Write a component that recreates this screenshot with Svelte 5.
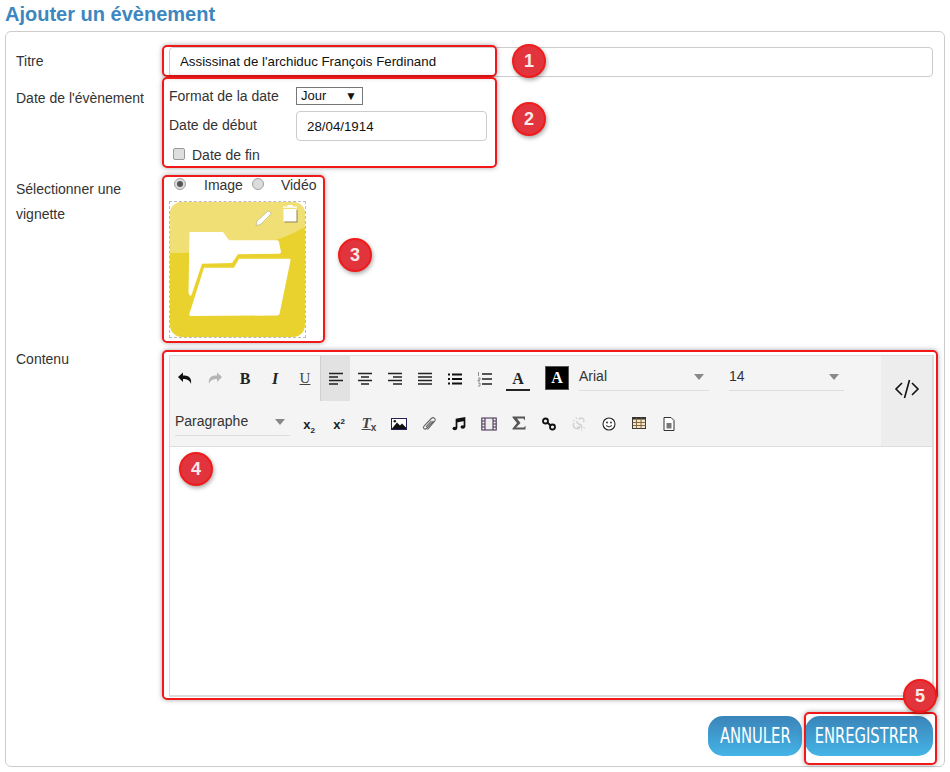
<script lang="ts">
	let title = 'Assissinat de l\'archiduc François Ferdinand';
	let startDate = '28/04/1914';

	const marks = [
		{ id: 'box-1', x: 162, y: 45, w: 335, h: 32 },
		{ id: 'box-2', x: 162, y: 77, w: 335, h: 91 },
		{ id: 'box-3', x: 162, y: 175, w: 163, h: 168 },
		{ id: 'box-4', x: 162, y: 350, w: 776, h: 350 },
		{ id: 'box-5', x: 804, y: 712, w: 133, h: 53 }
	];

	const badges = [
		{ n: 1, x: 529, y: 61 },
		{ n: 2, x: 529, y: 119 },
		{ n: 3, x: 355, y: 255 },
		{ n: 4, x: 196, y: 469 },
		{ n: 5, x: 920, y: 696 }
	];
</script>

<div class="page">
	<h1>Ajouter un évènement</h1>

	<form class="card">
		<div class="row">
			<label class="lbl title-lbl" for="titre">Titre</label>
			<input id="titre" class="field title-field" type="text" value={title} />
		</div>

		<div class="row date-row">
			<div class="lbl date-lbl">Date de l'évènement</div>
			<div class="date-grid">
				<span class="sub format">Format de la date</span>
				<div class="select"><span>Jour</span><span class="arr">▼</span></div>
				<span class="sub debut">Date de début</span>
				<input class="field date-field" type="text" value={startDate} />
				<div class="check-line">
					<span class="checkbox"></span>
					<span>Date de fin</span>
				</div>
			</div>
		</div>

		<div class="row thumb-row">
			<div class="lbl thumb-lbl">Sélectionner une vignette</div>
			<div>
				<div class="radios">
					<span class="radio on"></span>
					<span class="r-image">Image</span>
					<span class="radio"></span>
					<span class="r-video">Vidéo</span>
				</div>
				<div class="thumb">
					<svg width="135" height="135" viewBox="1 0 135 135">
						<rect x="1" y="0" width="135" height="135" rx="12" fill="#ead22e" />
						<path d="M1 12a12 12 0 0 1 12-12H124a12 12 0 0 1 12 12V25Q90 52 1 51Z" fill="#f0df75" />
						<path d="M20.500 30H54L60 38.300H108.500Q109.500 38.300 110 40L112 50Q112 51.700 110 51.700L69 52.300L63 61L33 61.700L22.500 93Q21 95 19.500 91Z" fill="#fff" />
						<path d="M70 56.700H120Q122 56.700 121.500 58.500L110.500 112Q110 113.300 108 113.500L22 114Q19.500 114 20.500 111.500L35 65.700H65Z" fill="#fff" />
						<path d="M87 23.500L88 19L98.500 9.500Q100 8.500 101.500 10Q102.500 11.500 101 13L91.500 22.500Z" fill="#fff" stroke="#b9b48a" stroke-width=".7" />
						<path d="M115.500 8H128.500V20.500H115.500Z" fill="#8d8450" />
						<path d="M114.500 7H127.500V19.500H114.500ZM114 4.500H128V5.700H114ZM118.500 3H123.500V4.500H118.500Z" fill="#fff" />
					</svg>
				</div>
			</div>
		</div>

		<div class="row editor-row">
			<div class="lbl content-lbl">Contenu</div>
			<div class="editor">
				<div class="toolbar">
					<div class="tools">
						<div class="tool-line">
							<button type="button" class="tb" aria-label="Annuler">
								<svg viewBox="0 0 16 16"><path d="M1 6L6 1.500V4.500C12 4.500 15 7 14 13C13 9.500 10.500 8 6 8V11Z" fill="#111" /></svg>
							</button>
							<button type="button" class="tb" aria-label="Rétablir">
								<svg viewBox="0 0 16 16"><path d="M15 6L10 1.500V4.500C4 4.500 1 7 2 13C3 9.500 5.500 8 10 8V11Z" fill="#b5b5b5" /></svg>
							</button>
							<button type="button" class="tb txt bold">B</button>
							<button type="button" class="tb txt ital">I</button>
							<button type="button" class="tb txt under">U</button>
							<button type="button" class="tb active" aria-label="Aligner à gauche">
								<svg viewBox="0 0 16 16"><path d="M1 2.500H15M1 6H10M1 9.500H15M1 13H10" stroke="#222" stroke-width="1.600" /></svg>
							</button>
							<button type="button" class="tb" aria-label="Centrer">
								<svg viewBox="0 0 16 16"><path d="M1 2.500H15M4 6H12M1 9.500H15M4 13H12" stroke="#222" stroke-width="1.600" /></svg>
							</button>
							<button type="button" class="tb" aria-label="Aligner à droite">
								<svg viewBox="0 0 16 16"><path d="M1 2.500H15M6 6H15M1 9.500H15M6 13H15" stroke="#222" stroke-width="1.600" /></svg>
							</button>
							<button type="button" class="tb" aria-label="Justifier">
								<svg viewBox="0 0 16 16"><path d="M1 2.500H15M1 6H15M1 9.500H15M1 13H15" stroke="#222" stroke-width="1.600" /></svg>
							</button>
							<button type="button" class="tb" aria-label="Liste">
								<svg viewBox="0 0 16 16"><path d="M5 3.500H15M5 8H15M5 12.500H15M1 3.500H3M1 8H3M1 12.500H3" stroke="#111" stroke-width="2" /></svg>
							</button>
							<button type="button" class="tb" aria-label="Liste numérotée">
								<svg viewBox="0 0 16 16"><path d="M5 3H15M5 8H15M5 13H15" stroke="#222" stroke-width="1.700" /><path d="M1.500 1V5M1 7H3V9H1V10H3M1 12H3V15H1" stroke="#777" stroke-width=".8" fill="none" /></svg>
							</button>
							<button type="button" class="color-a">A</button>
							<button type="button" class="color-bg">A</button>
							<div class="drop font"><span>Arial</span><i></i></div>
							<div class="drop size"><span>14</span><i></i></div>
						</div>
						<div class="tool-line">
							<div class="drop para"><span>Paragraphe</span><i></i></div>
							<button type="button" class="tb txt sub-sup"><span>x<sub>2</sub></span></button>
							<button type="button" class="tb txt sub-sup"><span>x<sup>2</sup></span></button>
							<button type="button" class="tb txt clear"><span><b>T</b><small>x</small></span></button>
							<button type="button" class="tb" aria-label="Image">
								<svg viewBox="0 0 16 16"><rect x=".5" y="2.500" width="15" height="11" fill="#fff" stroke="#2d1f55" /><path d="M1 12.500L6 6.500L9 9.500L11 7.500L15 11.500V13H1Z" fill="#111" /><circle cx="3.800" cy="5.200" r="1.300" fill="#222" /></svg>
							</button>
							<button type="button" class="tb" aria-label="Joindre">
								<svg viewBox="0 0 16 16"><path d="M12.500 5L5.500 12.500C3.800 14.300 1.300 12 3 10L10.300 2.500C12.500 .5 15.700 3 13.500 5.500L6.500 13.500" fill="none" stroke="#666" stroke-width="1.100" /><path d="M10.500 4.800L5 10.800" stroke="#666" stroke-width="1.100" /></svg>
							</button>
							<button type="button" class="tb" aria-label="Audio">
								<svg viewBox="0 0 16 16"><path d="M5.500 12V3.500L13.500 2V11" fill="none" stroke="#111" stroke-width="1.700" /><path d="M5.500 3.500L13.500 2V5L5.500 6.500Z" fill="#111" /><ellipse cx="3.800" cy="12.500" rx="2.300" ry="1.800" fill="#111" /><ellipse cx="11.800" cy="11" rx="2.300" ry="1.800" fill="#111" /></svg>
							</button>
							<button type="button" class="tb" aria-label="Vidéo">
								<svg viewBox="0 0 16 16"><rect x=".8" y="2" width="14.400" height="12" fill="#eee" stroke="#3b2a4a" /><path d="M4 2V14M12 2V14M1 5H4M1 8H4M1 11H4M12 5H15M12 8H15M12 11H15" stroke="#4b2a55" stroke-width="1" /></svg>
							</button>
							<button type="button" class="tb lift" aria-label="Formule">
								<svg viewBox="0 0 16 16"><path d="M1.500 1.500H14V5.500L12.500 3.500H6L9.500 8L5 12.500H13L14.500 10.500V14.500H1.500V13.500L6 8L1.500 2.500Z" fill="#555" /></svg>
							</button>
							<button type="button" class="tb" aria-label="Lien">
								<svg viewBox="0 0 16 16"><circle cx="4.500" cy="5" r="2.500" fill="none" stroke="#111" stroke-width="1.800" /><circle cx="11.500" cy="11" r="2.500" fill="none" stroke="#111" stroke-width="1.800" /><path d="M6.500 6.700L9.500 9.300" stroke="#111" stroke-width="2" /></svg>
							</button>
							<button type="button" class="tb" aria-label="Retirer le lien">
								<svg viewBox="0 0 16 16"><path d="M7.500 3.500C10 .5 14.500 3 12.500 6M3 7C1 10 4 14 7.500 12.500L9 10.500C8 11.500 7 11.500 6 11M6 5C5 6.500 7.500 8 9 8.500C10.500 9 11.500 10.500 10 12.500" fill="none" stroke="#d0d0d0" stroke-width="1.400" /><path d="M2 4L4 5M5 1L5.500 3M14 12L12.500 11.500M11 15L10.500 13.500" stroke="#d0d0d0" /></svg>
							</button>
							<button type="button" class="tb" aria-label="Émoticône">
								<svg viewBox="0 0 16 16"><circle cx="8" cy="8" r="6" fill="#fff" stroke="#222" stroke-width="1.100" /><circle cx="6" cy="6.500" r=".9" fill="#222" /><circle cx="10" cy="6.500" r=".9" fill="#222" /><path d="M5 9.500Q8 12.500 11 9.500" fill="none" stroke="#222" /></svg>
							</button>
							<button type="button" class="tb lift" aria-label="Tableau">
								<svg viewBox="0 0 16 16"><rect x="1.500" y="2.500" width="13" height="11" fill="#f5e6c8" stroke="#3a3a3a" /><path d="M1.500 2H14.500V4.500H1.500Z" fill="#333" /><path d="M1.500 7.500H14.500M1.500 10.500H14.500M5.500 2.500V13.500M10 2.500V13.500" stroke="#7a5a35" stroke-width=".9" /></svg>
							</button>
							<button type="button" class="tb" aria-label="Document">
								<svg viewBox="0 0 16 16"><path d="M3 1.500H10L13 4.500V14.500H3Z" fill="#fff" stroke="#333" /><path d="M5.500 7H10.500V12.500H5.500Z" fill="#777" /></svg>
							</button>
						</div>
					</div>
					<button type="button" class="code" aria-label="Code source">
						<svg width="26" height="20" viewBox="0 0 26 20"><path d="M8 4L2 10L8 16M18 4L24 10L18 16M15.500 1L10.500 19" fill="none" stroke="#111" stroke-width="1.600" /></svg>
					</button>
				</div>
				<div class="body"></div>
			</div>
		</div>

		<div class="actions">
			<button type="button" class="btn cancel"><span>ANNULER</span></button>
			<button type="button" class="btn save"><span>ENREGISTRER</span></button>
		</div>
	</form>

	{#each marks as m (m.id)}
		<div class="mark" style="left:{m.x}px;top:{m.y}px;width:{m.w}px;height:{m.h}px"></div>
	{/each}
	{#each badges as b (b.n)}
		<div class="badge" style="left:{b.x - 17}px;top:{b.y - 17}px">{b.n}</div>
	{/each}
</div>

<style>
	:global(body) {
		margin: 0;
		background: #fff;
	}

	.page {
		position: relative;
		width: 950px;
		height: 772px;
		overflow: hidden;
		font-family: 'Liberation Sans', Arial, sans-serif;
		font-size: 14px;
		color: #333;
	}

	h1 {
		margin: 0;
		padding: 3px 0 0 5px;
		height: 31px;
		box-sizing: border-box;
		font-size: 20px;
		line-height: 23px;
		font-weight: 700;
		color: #3c87c0;
	}

	.card {
		box-sizing: border-box;
		width: 940px;
		height: 736px;
		margin-left: 5px;
		padding: 15px 11px 0 10px;
		border: 1px solid #ccc;
		border-radius: 6px;
	}

	.row {
		display: grid;
		grid-template-columns: 153px 1fr;
	}

	.lbl {
		line-height: 25px;
	}

	.title-lbl {
		padding-top: 2px;
	}

	.field {
		box-sizing: border-box;
		width: 100%;
		height: 30px;
		padding: 0 10px;
		border: 1px solid #ccc;
		border-radius: 4px;
		font: 13.3px 'Liberation Sans', Arial, sans-serif;
		color: #111;
		outline: none;
	}

	.title-field {
		padding-bottom: 2px;
	}

	.date-row {
		padding-top: 10px;
	}

	.date-lbl {
		margin-top: -1px;
	}

	.date-grid {
		display: grid;
		grid-template-columns: 127px 191px;
		align-items: center;
		row-gap: 6px;
	}

	.sub {
		line-height: 18px;
	}

	.debut {
		margin-top: -2px;
	}

	.select {
		box-sizing: border-box;
		display: flex;
		justify-content: space-between;
		width: 67px;
		height: 18px;
		padding: 0 5px 0 4px;
		border: 1px solid #777;
		font-size: 13px;
		line-height: 16px;
		color: #111;
	}

	.arr {
		font-size: 12px;
	}

	.check-line {
		grid-column: 1 / -1;
		display: flex;
		align-items: center;
		gap: 7px;
		padding-left: 4px;
		height: 16px;
		line-height: 16px;
	}

	.checkbox {
		box-sizing: border-box;
		width: 12px;
		height: 12px;
		border: 1px solid #9a9a9a;
		border-radius: 2px;
		background: #dedede;
		margin-top: -3px;
	}

	.thumb-row {
		padding-top: 14px;
	}

	.thumb-lbl {
		width: 130px;
	}

	.radios {
		display: flex;
		align-items: center;
		height: 16px;
		margin-bottom: 8px;
		padding-left: 5px;
	}

	.radio {
		position: relative;
		box-sizing: border-box;
		width: 12px;
		height: 12px;
		border: 1px solid #a0a0a0;
		border-radius: 50%;
		background: #dcdcdc;
		margin-top: -3px;
	}

	.radio.on::after {
		content: '';
		position: absolute;
		left: 2px;
		top: 2px;
		width: 6px;
		height: 6px;
		border-radius: 50%;
		background: #555;
	}

	.r-image {
		margin: 0 9px 0 18px;
	}

	.r-video {
		margin-left: 17px;
	}

	.thumb {
		box-sizing: border-box;
		width: 137px;
		height: 137px;
		border: 1px dashed #bbb;
	}

	.thumb svg {
		display: block;
	}

	.editor-row {
		padding-top: 17px;
	}

	.content-lbl {
		margin-top: -8px;
	}

	.editor {
		box-sizing: border-box;
		height: 342px;
		margin-right: -1px;
		display: flex;
		flex-direction: column;
		border-style: solid;
		border-width: 1px 2px 2px 1px;
		border-color: #dcdcdc;
	}

	.toolbar {
		display: flex;
		justify-content: space-between;
		height: 90px;
		flex: none;
		background: #f4f4f4;
		border-bottom: 1px solid #ddd;
	}

	.tools {
		flex: 1;
	}

	.tool-line {
		display: flex;
		align-items: flex-start;
		height: 45px;
	}

	.tb {
		box-sizing: border-box;
		flex: none;
		width: 30px;
		height: 45px;
		padding: 0;
		border: 0;
		background: none;
		display: flex;
		align-items: center;
		justify-content: center;
	}

	.tb svg {
		width: 16px;
		height: 16px;
	}

	.tb.active {
		background: #e2e2e2;
		border-left: 1px solid #d0d0d0;
	}

	.tb.lift svg {
		margin-top: -2px;
	}

	.txt {
		font: 700 16px 'Liberation Serif', serif;
		color: #222;
	}

	.ital {
		font-style: italic;
	}

	.under {
		font-weight: 400;
		font-size: 15px;
		text-decoration: underline;
		color: #444;
	}

	.sub-sup {
		font: 700 13px 'Liberation Sans', sans-serif;
		padding-top: 1px;
	}

	.sub-sup sub,
	.sub-sup sup {
		font-size: 8px;
		line-height: 0;
	}

	.clear {
		font: italic 700 15px 'Liberation Serif', serif;
		color: #444;
	}

	.clear b {
		text-decoration: underline;
	}

	.clear small {
		font: 700 10px 'Liberation Sans', sans-serif;
		vertical-align: -3px;
	}

	.color-a {
		box-sizing: border-box;
		flex: none;
		width: 24px;
		height: 25px;
		margin: 10px 0 0 6px;
		padding: 2px 0 0;
		border: 0;
		border-bottom: 2px solid #222;
		background: none;
		font: 700 16px/18px 'Liberation Serif', serif;
		color: #222;
	}

	.color-bg {
		box-sizing: border-box;
		flex: none;
		width: 24px;
		height: 24px;
		margin: 10px 0 0 15px;
		padding: 0;
		border: 1px solid #555;
		background: #000;
		font: 700 16px/20px 'Liberation Serif', serif;
		color: #fff;
	}

	.drop {
		box-sizing: border-box;
		display: flex;
		justify-content: space-between;
		flex: none;
		height: 35px;
		border-bottom: 1px solid #ddd;
		font-size: 14px;
		line-height: 20px;
		padding-top: 10px;
		color: #333;
	}

	.drop i {
		width: 0;
		height: 0;
		margin: 8px 5px 0 0;
		border: 5px solid transparent;
		border-top: 6px solid #888;
		border-bottom: 0;
	}

	.font {
		width: 130px;
		margin-left: 10px;
	}

	.size {
		width: 115px;
		margin-left: 20px;
	}

	.para {
		width: 115px;
		margin: 0 4px 0 5px;
	}

	.code {
		flex: none;
		width: 51px;
		padding: 23px 0 0;
		border: 0;
		background: #ededed;
		display: flex;
		align-items: flex-start;
		justify-content: center;
	}

	.body {
		flex: 1;
		background: #fff;
	}

	.actions {
		display: flex;
		justify-content: flex-end;
		gap: 3px;
		margin-top: 19px;
	}

	.btn {
		height: 40px;
		padding: 0;
		border: 0;
		border-radius: 15px;
		background: linear-gradient(#3a84b9, #45b4e6);
		color: #fff;
		font: 21px 'DejaVu Sans Condensed', 'DejaVu Sans', sans-serif;
	}

	.btn span {
		display: inline-block;
		transform: scaleX(0.78);
	}

	.cancel {
		width: 94px;
	}

	.save {
		width: 128px;
	}

	.save span {
		margin-left: -5px;
	}

	.mark {
		position: absolute;
		box-sizing: border-box;
		border: 2px solid #f01818;
		border-radius: 5px;
		box-shadow: 0 0 5px rgba(0, 0, 0, 0.35);
		pointer-events: none;
	}

	.badge {
		position: absolute;
		box-sizing: border-box;
		width: 34px;
		height: 34px;
		border: 2px solid #f01c1c;
		border-radius: 50%;
		background: #e2343c;
		box-shadow: 1px 2px 4px rgba(0, 0, 0, 0.35);
		color: #fbe9e9;
		font: 700 18px/30px 'Liberation Sans', sans-serif;
		text-align: center;
	}
</style>
